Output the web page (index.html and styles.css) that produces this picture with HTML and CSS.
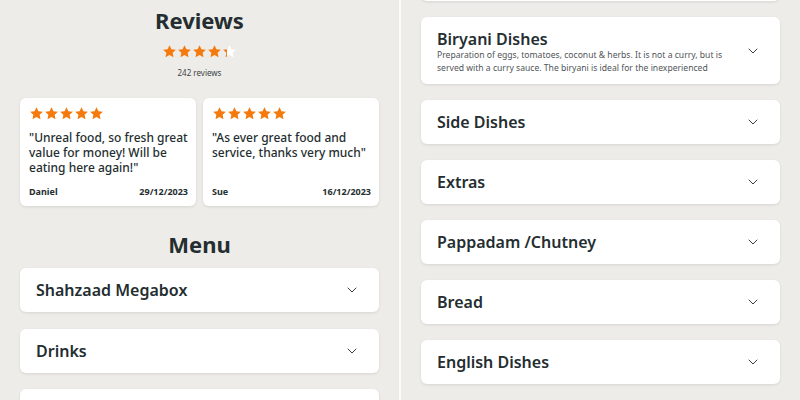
FILE: index.html
```html
<!DOCTYPE html>
<html>
<head>
<meta charset="utf-8">
<link rel="stylesheet" href="styles.css">
</head>
<body>
<svg width="0" height="0" class="defs">
  <defs>
    <symbol id="star" viewBox="0 0 24 24"><path d="M12 1.8l3.1 6.5 7.1.9-5.2 4.9 1.3 7-6.3-3.4-6.3 3.4 1.3-7-5.2-4.9 7.1-.9z" stroke-linejoin="round"/></symbol>
    <linearGradient id="part" x1="0" x2="1" y1="0" y2="0">
      <stop offset="0.32" stop-color="#f47a0e"/>
      <stop offset="0.32" stop-color="#ffffff"/>
    </linearGradient>
    <symbol id="chev" viewBox="0 0 10 6"><path d="M1 1l4 4 4-4" fill="none" stroke="#3a3f41" stroke-width="1" stroke-linecap="round" stroke-linejoin="round"/></symbol>
  </defs>
</svg>
<div class="page">
  <section class="panel left">
    <h2 class="heading">Reviews</h2>
    <div class="stars big">
      <svg class="star"><use href="#star"/></svg>
      <svg class="star"><use href="#star"/></svg>
      <svg class="star"><use href="#star"/></svg>
      <svg class="star"><use href="#star"/></svg>
      <svg class="star partial"><use href="#star"/></svg>
    </div>
    <div class="count">242 reviews</div>
    <div class="reviews">
      <div class="review">
        <div class="stars">
          <svg class="star"><use href="#star"/></svg>
          <svg class="star"><use href="#star"/></svg>
          <svg class="star"><use href="#star"/></svg>
          <svg class="star"><use href="#star"/></svg>
          <svg class="star"><use href="#star"/></svg>
        </div>
        <p class="quote">"Unreal food, so fresh great value for money! Will be eating here again!"</p>
        <div class="meta"><span>Daniel</span><span>29/12/2023</span></div>
      </div>
      <div class="review">
        <div class="stars">
          <svg class="star"><use href="#star"/></svg>
          <svg class="star"><use href="#star"/></svg>
          <svg class="star"><use href="#star"/></svg>
          <svg class="star"><use href="#star"/></svg>
          <svg class="star"><use href="#star"/></svg>
        </div>
        <p class="quote">"As ever great food and service, thanks very much"</p>
        <div class="meta"><span>Sue</span><span>16/12/2023</span></div>
      </div>
    </div>
    <h2 class="heading menu-heading">Menu</h2>
    <div class="list">
      <div class="item"><span class="title">Shahzaad Megabox</span><svg class="chev"><use href="#chev"/></svg></div>
      <div class="item"><span class="title">Drinks</span><svg class="chev"><use href="#chev"/></svg></div>
      <div class="item"></div>
    </div>
  </section>
  <div class="divider"></div>
  <section class="panel right">
    <div class="list scrolled">
      <div class="item"></div>
      <div class="item tall">
        <div class="text">
          <span class="title">Biryani Dishes</span>
          <p class="desc">Preparation of eggs, tomatoes, coconut &amp; herbs. It is not a curry, but is served with a curry sauce. The biryani is ideal for the inexperienced</p>
        </div>
        <svg class="chev"><use href="#chev"/></svg>
      </div>
      <div class="item"><span class="title">Side Dishes</span><svg class="chev"><use href="#chev"/></svg></div>
      <div class="item"><span class="title">Extras</span><svg class="chev"><use href="#chev"/></svg></div>
      <div class="item"><span class="title">Pappadam /Chutney</span><svg class="chev"><use href="#chev"/></svg></div>
      <div class="item"><span class="title">Bread</span><svg class="chev"><use href="#chev"/></svg></div>
      <div class="item"><span class="title">English Dishes</span><svg class="chev"><use href="#chev"/></svg></div>
    </div>
  </section>
</div>
</body>
</html>
```
FILE: styles.css
```css
* { box-sizing: border-box; }
html, body { margin: 0; padding: 0; }
body {
  width: 800px;
  height: 400px;
  overflow: hidden;
  font-family: "Noto Sans", "Open Sans", sans-serif;
  color: #242e30;
  background: #eeece9;
}
.defs { position: absolute; }
.page {
  display: flex;
  height: 400px;
}
.panel {
  width: 399px;
  height: 400px;
  overflow: hidden;
  padding: 0 20px;
  background: #eeece9;
}
.divider {
  width: 2px;
  background: #fbfbfa;
  box-shadow: 0 0 2px rgba(0,0,0,0.04);
}
.heading {
  margin: 6px 0 0;
  font-size: 22px;
  line-height: 28px;
  font-weight: 700;
  text-align: center;
}
.stars {
  display: flex;
  height: 15px;
}
.stars.big {
  justify-content: center;
  margin-top: 10px;
}
.star {
  width: 15px;
  height: 15px;
  fill: #f47a0e;
}
.star.partial { fill: url(#part); }
.count {
  margin-top: 8px;
  text-align: center;
  font-size: 8px;
  line-height: 12px;
  color: #3c4446;
}
.reviews {
  display: grid;
  grid-template-columns: 1fr 1fr;
  gap: 7px;
  margin-top: 19px;
}
.review {
  display: flex;
  flex-direction: column;
  height: 108px;
  padding: 8px 8px 8px 9px;
  background: #fff;
  border-radius: 6px;
  box-shadow: 0 1px 3px rgba(0,0,0,0.1);
}
.quote {
  margin: 9px 0 0;
  font-size: 12px;
  line-height: 15px;
  font-weight: 500;
}
.meta {
  margin-top: auto;
  display: flex;
  justify-content: space-between;
  font-size: 9px;
  line-height: 12px;
  font-weight: 700;
}
.menu-heading { margin-top: 24px; }
.list {
  display: flex;
  flex-direction: column;
  gap: 16.5px;
  margin-top: 10px;
}
.item {
  display: flex;
  align-items: center;
  justify-content: space-between;
  height: 44px;
  padding: 0 22px 0 16px;
  background: #fff;
  border-radius: 6px;
  box-shadow: 0 1px 3px rgba(0,0,0,0.1);
  flex-shrink: 0;
}
.title {
  font-size: 16px;
  line-height: 20px;
  font-weight: 600;
}
.chev {
  width: 10px;
  height: 6px;
  flex-shrink: 0;
}
.scrolled {
  margin-top: -43px;
  gap: 16px;
}
.item.tall {
  height: 67px;
  align-items: center;
}
.text { display: flex; flex-direction: column; padding-right: 8px; padding-top: 2px; }
.desc {
  margin: 0;
  font-size: 8.6px;
  line-height: 13px;
  color: #4f5557;
}
```
